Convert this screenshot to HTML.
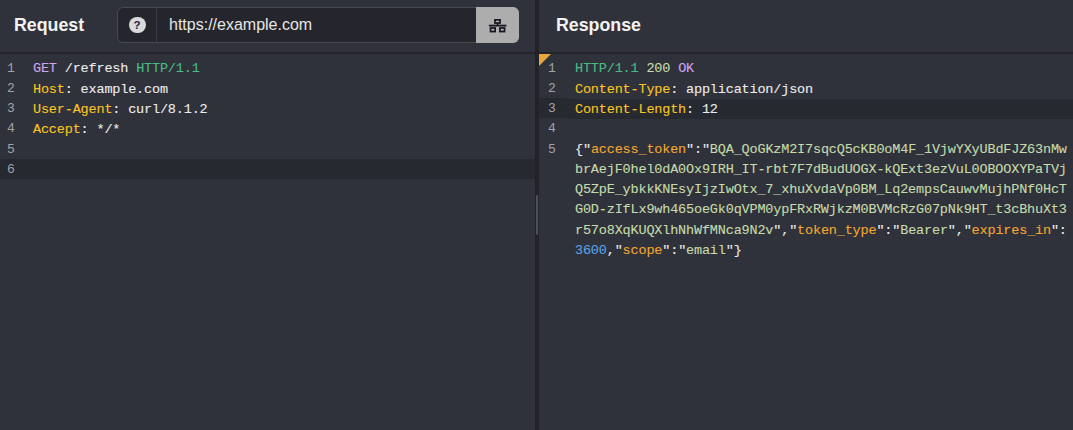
<!DOCTYPE html>
<html><head><meta charset="utf-8">
<style>
*{margin:0;padding:0;box-sizing:border-box}
html,body{width:1073px;height:430px;overflow:hidden;background:#30323b}
body{position:relative;font-family:"Liberation Sans",sans-serif}
.hdr{position:absolute;top:0;height:52px;}
.title{position:absolute;top:14.5px;font-weight:bold;font-size:17.8px;color:#f2f2f2;line-height:20px}
.hline{position:absolute;left:0;top:52px;width:1073px;height:2px;background:#23252b}
.divider{position:absolute;left:535px;top:0;width:4px;height:430px;background:#222329}
.handle{position:absolute;left:536px;top:195px;width:2px;height:40px;background:#4d4f5a;border-radius:1px}
.url{position:absolute;left:117px;top:7px;width:402px;height:36px;border:1px solid #474952;border-radius:6px;background:#25262d}
.helpsep{position:absolute;left:156px;top:8px;width:1px;height:34px;background:#3c3e47}
.qc{position:absolute;left:129.2px;top:16.7px;width:16.4px;height:16.4px;border-radius:50%;background:#dadada}
.qc span{position:absolute;left:-0.3px;top:0.6px;width:16.4px;text-align:center;font-weight:bold;font-size:11.5px;line-height:16.4px;color:#1d1f4a}
.urltext{position:absolute;left:169px;top:8px;line-height:34px;font-size:16px;color:#e6e6e6}
.btn{position:absolute;left:476px;top:7px;width:43px;height:36px;background:#adadad;border-radius:0 6px 6px 0}
.code{position:absolute;font-family:"Liberation Mono",monospace;font-size:13.5px;letter-spacing:-0.17px;line-height:20px;color:#ececec;white-space:pre;-webkit-text-stroke:0.1px currentColor}
.ln{position:absolute;margin-top:-4px;font-family:"Liberation Mono",monospace;font-size:13px;line-height:20px;color:#a0a2aa;white-space:pre}
.hl{position:absolute;height:20px;background:#262930}
.m{color:#cfa5f2}.k{color:#f9c525}.g{color:#47bd85}.s{color:#c5dbab}.o{color:#f2a72f}.n{color:#58a3e6}.p{color:#e8e8e8}
.tri{position:absolute;left:539px;top:54px;width:0;height:0;border-top:12px solid #e6a83c;border-right:12px solid transparent}
</style></head><body>
<div class="hl" style="left:0;top:159px;width:535px"></div>
<div class="hl" style="left:539px;top:98px;width:30px"></div>
<div class="hl" style="left:569px;top:99px;width:504px"></div>

<div class="title" style="left:14px">Request</div>
<div class="title" style="left:556px">Response</div>

<div class="url"></div>
<div class="helpsep"></div>
<div class="qc"><span>?</span></div>
<div class="urltext">https://example.com</div>
<div class="btn">
  <svg width="43" height="36" viewBox="0 0 43 36" style="position:absolute;left:0;top:0">
    <g fill="none" stroke="#15161f" stroke-width="1.7">
      <rect x="18.95" y="12.85" width="5.1" height="3.2"/>
      <line x1="21.5" y1="16.5" x2="21.5" y2="18.2" stroke-width="1.5"/>
      <line x1="12.9" y1="18.6" x2="30.4" y2="18.6" stroke-width="1.8"/>
      <rect x="14.55" y="20.95" width="4.6" height="3.6"/>
      <rect x="23.95" y="20.95" width="4.6" height="3.6"/>
    </g>
  </svg>
</div>

<div class="hline"></div>
<div class="divider"></div>
<div class="handle"></div>
<div class="tri"></div>

<div class="ln" style="left:7px;top:63px">1</div>
<div class="ln" style="left:7px;top:83px">2</div>
<div class="ln" style="left:7px;top:103px">3</div>
<div class="ln" style="left:7px;top:123px">4</div>
<div class="ln" style="left:7px;top:144px">5</div>
<div class="ln" style="left:7px;top:164px">6</div>
<div class="ln" style="left:548px;top:63px">1</div>
<div class="ln" style="left:548px;top:83px">2</div>
<div class="ln" style="left:548px;top:103px">3</div>
<div class="ln" style="left:548px;top:123px">4</div>
<div class="ln" style="left:548px;top:144px">5</div>
<div class="code" style="left:33px;top:59px"><span class="m">GET</span> /refresh <span class="g">HTTP/1.1</span></div>
<div class="code" style="left:33px;top:80px"><span class="k">Host</span>: example.com</div>
<div class="code" style="left:33px;top:100px"><span class="k">User-Agent</span>: curl/8.1.2</div>
<div class="code" style="left:33px;top:120px"><span class="k">Accept</span>: */*</div>
<div class="code" style="left:575px;top:59px"><span class="g">HTTP/1.1</span> <span class="s">200</span> <span class="m">OK</span></div>
<div class="code" style="left:575px;top:80px"><span class="k">Content-Type</span>: application/json</div>
<div class="code" style="left:575px;top:100px"><span class="k">Content-Length</span>: 12</div>
<div class="code" style="left:575px;top:140px">{"<span class="o">access_token</span>":"<span class="s">BQA_QoGKzM2I7sqcQ5cKB0oM4F_1VjwYXyUBdFJZ63nMw</span></div>
<div class="code" style="left:575px;top:160px"><span class="s">brAejF0hel0dA0Ox9IRH_IT-rbt7F7dBudUOGX-kQExt3ezVuL0OBOOXYPaTVj</span></div>
<div class="code" style="left:575px;top:180px"><span class="s">Q5ZpE_ybkkKNEsyIjzIwOtx_7_xhuXvdaVp0BM_Lq2empsCauwvMujhPNf0HcT</span></div>
<div class="code" style="left:575px;top:200px"><span class="s">G0D-zIfLx9wh465oeGk0qVPM0ypFRxRWjkzM0BVMcRzG07pNk9HT_t3cBhuXt3</span></div>
<div class="code" style="left:575px;top:221px"><span class="s">r57o8XqKUQXlhNhWfMNca9N2v</span>","<span class="o">token_type</span>":"<span class="s">Bearer</span>","<span class="o">expires_in</span>":</div>
<div class="code" style="left:575px;top:241px"><span class="n">3600</span>,"<span class="o">scope</span>":"<span class="s">email</span>"}</div>
</body></html>
